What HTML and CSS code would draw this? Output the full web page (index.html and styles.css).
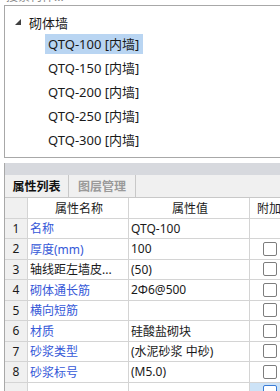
FILE: index.html
```html
<!DOCTYPE html>
<html lang="zh-CN">
<head>
    <meta charset="UTF-8">
    <meta name="viewport" content="width=device-width, initial-scale=1.0">
    <title>构件列表</title>
    <link rel="stylesheet" href="styles.css">
</head>
<body>
    <div class="search-cut"><span>搜索构件...</span></div>

    <!-- Component tree -->
    <div class="tree-panel">
        <div class="tree-root">
            <svg class="tree-arrow" width="6" height="6" viewBox="0 0 6 6">
                <polygon points="6,0 6,6 0,6" fill="#404040"></polygon>
            </svg>
            <span>砌体墙</span>
        </div>
        <div class="tree-item"><span class="selected">QTQ-100 [内墙]</span></div>
        <div class="tree-item"><span>QTQ-150 [内墙]</span></div>
        <div class="tree-item"><span>QTQ-200 [内墙]</span></div>
        <div class="tree-item"><span>QTQ-250 [内墙]</span></div>
        <div class="tree-item"><span>QTQ-300 [内墙]</span></div>
    </div>

    <!-- Property panel -->
    <div class="prop-panel">
        <div class="prop-bar"></div>
        <div class="tabs">
            <div class="tab active">属性列表</div>
            <div class="tab">图层管理</div>
        </div>
        <div class="grid">
            <div class="cell num head"></div>
            <div class="cell head center">属性名称</div>
            <div class="cell head center">属性值</div>
            <div class="cell head extra">附加</div>

            <div class="cell num">1</div>
            <div class="cell name">名称</div>
            <div class="cell">QTQ-100</div>
            <div class="cell"></div>

            <div class="cell num">2</div>
            <div class="cell name">厚度(mm)</div>
            <div class="cell">100</div>
            <div class="cell check"><span class="box"></span></div>

            <div class="cell num">3</div>
            <div class="cell">轴线距左墙皮...</div>
            <div class="cell">(50)</div>
            <div class="cell check"><span class="box"></span></div>

            <div class="cell num">4</div>
            <div class="cell name">砌体通长筋</div>
            <div class="cell">2Φ6@500</div>
            <div class="cell check"><span class="box"></span></div>

            <div class="cell num">5</div>
            <div class="cell name">横向短筋</div>
            <div class="cell"></div>
            <div class="cell check"><span class="box"></span></div>

            <div class="cell num">6</div>
            <div class="cell name">材质</div>
            <div class="cell">硅酸盐砌块</div>
            <div class="cell check"><span class="box"></span></div>

            <div class="cell num">7</div>
            <div class="cell name">砂浆类型</div>
            <div class="cell">(水泥砂浆 中砂)</div>
            <div class="cell check"><span class="box"></span></div>

            <div class="cell num">8</div>
            <div class="cell name">砂浆标号</div>
            <div class="cell">(M5.0)</div>
            <div class="cell check"><span class="box"></span></div>

            <div class="cell num"></div>
            <div class="cell"></div>
            <div class="cell"></div>
            <div class="cell check hot"><span class="box"></span></div>
        </div>
    </div>
</body>
</html>
```

FILE: styles.css
```css
* {
    margin: 0;
    padding: 0;
    box-sizing: border-box;
}

body {
    font-family: "Noto Sans", "Noto Sans CJK SC", sans-serif;
    font-size: 12px;
    color: #1a1a1a;
    background: white;
    width: 280px;
    height: 391px;
    overflow: hidden;
}

/* Search row, scrolled mostly out of view */
.search-cut {
    height: 5px;
    overflow: hidden;
    padding-left: 6px;
    color: #8a8a8a;
}

.search-cut span {
    display: block;
    line-height: 16px;
    margin-top: -11px;
}

/* Tree */
.tree-panel {
    margin-left: 4px;
    width: 290px;
    height: 153px;
    border: 1px solid #a8a8a8;
    padding-top: 6px;
    font-size: 13px;
}

.tree-root {
    display: flex;
    align-items: center;
    height: 20px;
    margin-bottom: 2px;
    padding-left: 10px;
}

.tree-arrow {
    margin-right: 8px;
}

.tree-item {
    height: 20px;
    margin-bottom: 4px;
    padding-left: 40px;
}

.tree-item span {
    display: inline-block;
    height: 20px;
    line-height: 20px;
    padding: 0 4px 0 3px;
}

.tree-item .selected {
    background: #b9d5f2;
}

/* Property list */
.prop-panel {
    margin-top: 5px;
    margin-left: 4px;
    width: 300px;
    border-left: 1px solid #a8a8a8;
}

.prop-bar {
    height: 12px;
    background: #d7d9de;
}

.tabs {
    display: flex;
    height: 23px;
    background: #f0f0f0;
    border-bottom: 1px solid #c8c8c8;
}

.tab {
    display: flex;
    align-items: center;
    justify-content: center;
    width: 64px;
    border-right: 1px solid #c8c8c8;
    color: #9a9a9a;
    font-weight: bold;
}

.tab + .tab {
    width: 67px;
}

.tab.active {
    color: #111;
}

.grid {
    display: grid;
    grid-template-columns: 23px 101px 121px 55px;
    grid-auto-rows: 20.5px;
}

.grid .head {
    height: 21px;
}

.cell {
    display: flex;
    align-items: center;
    padding-left: 2px;
    border-right: 1px solid #d4d4d4;
    border-bottom: 1px solid #d4d4d4;
    white-space: nowrap;
    overflow: hidden;
}

.cell.num {
    justify-content: center;
    padding-left: 0;
    background: #f0f0f0;
}

.cell.center {
    justify-content: center;
}

.cell.extra {
    padding-left: 7px;
}

.cell.name {
    color: #3558d8;
}

.cell.check {
    padding-left: 13px;
}

.cell.hot {
    background: #cde3f7;
}

.box {
    width: 14px;
    height: 14px;
    border: 1px solid #7d7d7d;
    border-radius: 2px;
    background: white;
}

.cell.hot .box {
    border-color: #3a7bd5;
}
```
